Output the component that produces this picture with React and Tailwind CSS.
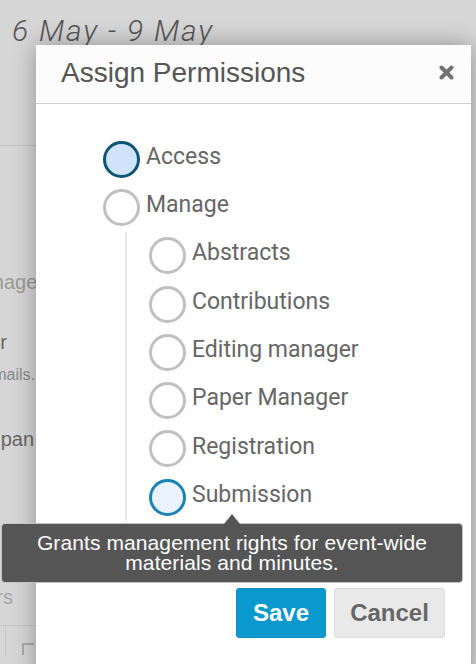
import React from "react";

const sans = { fontFamily: '"Liberation Sans", Arial, sans-serif' };
const roboto = { fontFamily: 'Roboto, "Liberation Sans", sans-serif' };

function Radio({ label, state }) {
  const circle =
    state === "access"
      ? "border-[#0d5475] bg-[#d1e2fb]"
      : state === "sub"
      ? "border-[#1a82b4] bg-[#eaf2fd]"
      : "border-[#c0c0c0] bg-white";
  return (
    <div className="flex items-center h-[48.3px]">
      <div className={`w-[37px] h-[37px] rounded-full border-[3px] shrink-0 ${circle}`} />
      <span className="ml-[6px] mb-[4px] text-[23px] text-[#666]" style={roboto}>
        {label}
      </span>
    </div>
  );
}

function Frag({ right, text, className }) {
  return (
    <div className={`flex justify-end whitespace-nowrap ${className}`} style={{ width: right }}>
      <span>{text}</span>
    </div>
  );
}

export default function App() {
  return (
    <div className="relative w-[476px] h-[664px] overflow-hidden bg-[#d6d6d6]" style={sans}>
      {/* background page */}
      <div className="flex flex-col">
        <div
          className="pl-[12px] pt-[11px] text-[30px] leading-[40px] font-light italic text-[#555] tracking-[1.8px]"
          style={roboto}
        >
          6 May - 9 May
        </div>
        <div className="mt-[94px] w-[36px] border-t border-[#c4c4c4]" />
        <Frag right={44} text="Paper Manager" className="mt-[124px] text-[20px] leading-[24px] text-[#9a9a9a]" />
        <Frag right={7} text="Organizer" className="mt-[36px] text-[20px] leading-[24px] text-[#666]" />
        <Frag right={35} text="Receive emails." className="mt-[11px] text-[16px] leading-[20px] text-[#888]" />
        <Frag right={34} text="Participan" className="mt-[42px] text-[20px] leading-[24px] text-[#666]" />
        <Frag right={13} text="Speakers" className="mt-[134px] text-[20px] leading-[24px] text-[#a6a6a6]" />
        <div className="mt-[16px] w-[36px] border-t border-[#c6c6c6]" />
        <div className="flex h-[30px]">
          <div className="ml-[5px] w-px h-full bg-[#c6c6c6]" />
          <div className="ml-[16px] mt-[17px] w-[12px] h-[12px] border-l-2 border-t-2 border-[#a9a9a9]" />
        </div>
      </div>

      {/* modal */}
      <div className="absolute left-[36px] top-[45px] w-[435px] h-[640px] bg-white shadow-[0_0_22px_rgba(0,0,0,0.32)] flex flex-col">
        <div className="h-[59px] flex items-center justify-between pl-[25px] pr-[17px] pb-[3px] bg-[#fcfcfc] border-b border-[#cfcfcf]">
          <span className="text-[28px] text-[#555]">Assign Permissions</span>
          <svg width="15" height="15" viewBox="0 0 15 15">
            <path d="M2.5 2.5 L12.5 12.5 M12.5 2.5 L2.5 12.5" stroke="#737373" strokeWidth="4" strokeLinecap="round" />
          </svg>
        </div>
        <div className="pt-[31px] pl-[67px] flex flex-col">
          <Radio label="Access" state="access" />
          <Radio label="Manage" state="off" />
          <div className="ml-[22px] border-l-2 border-[#e8e8e8] pl-[22px] flex flex-col">
            <Radio label="Abstracts" state="off" />
            <Radio label="Contributions" state="off" />
            <Radio label="Editing manager" state="off" />
            <Radio label="Paper Manager" state="off" />
            <Radio label="Registration" state="off" />
            <Radio label="Submission" state="sub" />
          </div>
        </div>
        <div className="mt-[67px] flex justify-end gap-[8px] pr-[26px]">
          <button className="w-[90px] h-[50px] rounded-[3px] bg-[#0a99cc] border border-[#0a8fc0] text-white font-bold text-[24px]">
            Save
          </button>
          <button className="w-[111px] h-[50px] rounded-[3px] bg-[#e9e9e9] border border-[#dcdcdc] text-[#666] font-bold text-[24px]">
            Cancel
          </button>
        </div>
      </div>

      {/* tooltip */}
      <div className="absolute left-[1px] top-[523px] w-[462px] h-[60px] rounded-[4px] bg-[#555] border border-[#c4c4c4] flex items-center justify-center text-center text-white text-[21px] leading-[20px] tracking-[0.1px]">
        <div className="absolute -top-[10px] left-[222px] w-0 h-0 border-l-[8px] border-r-[8px] border-b-[10px] border-l-transparent border-r-transparent border-b-[#555]" />
        <span>
          Grants management rights for event-wide
          <br />
          materials and minutes.
        </span>
      </div>
    </div>
  );
}
